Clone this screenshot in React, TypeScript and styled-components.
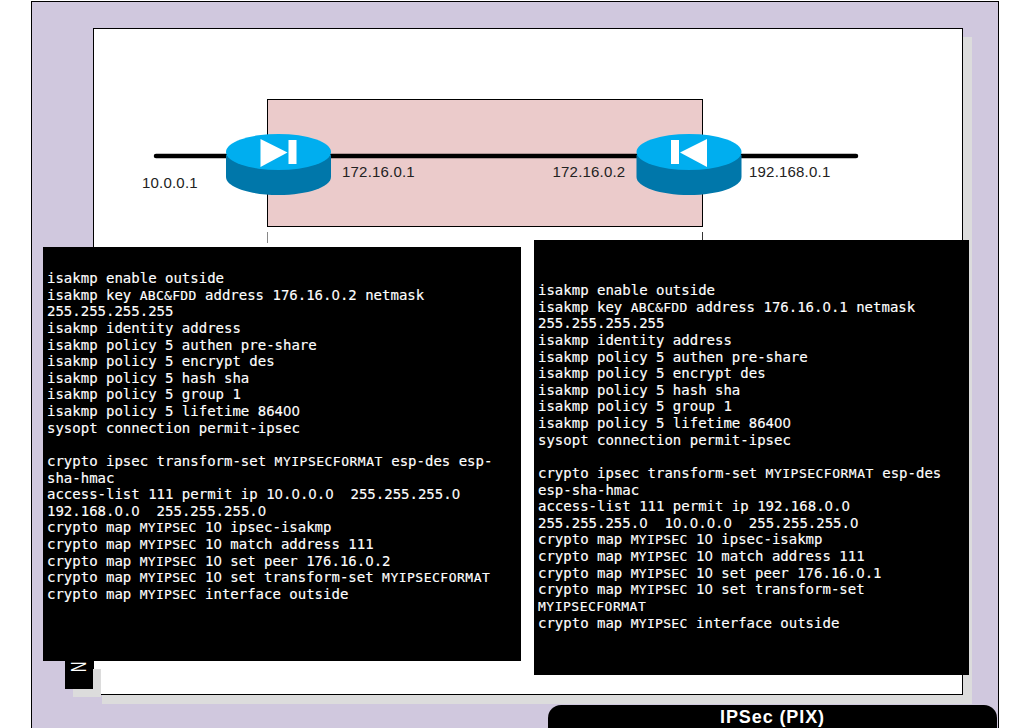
import React from 'react';
import styled, { createGlobalStyle } from 'styled-components';

const GlobalStyle = createGlobalStyle`
  html, body {
    margin: 0;
    padding: 0;
    background: #fff;
  }
`;

const Page = styled.div`
  position: relative;
  width: 1030px;
  height: 728px;
  overflow: hidden;
  padding: 1px 0 0 31px;
  box-sizing: border-box;
`;

const Slide = styled.div`
  box-sizing: border-box;
  width: 968px;
  height: 800px;
  padding: 26px 0 0 60.5px;
  background: #d0c8de;
  border: 1.5px solid #000;
`;

const Panel = styled.div`
  box-sizing: border-box;
  width: 870px;
  height: 667px;
  background: #fff;
  border: 1px solid #000;
  box-shadow: 9px 9px 0 #dcdcdc;
  padding: 70px 0 0 60px;
`;

const Diagram = styled.svg`
  display: block;
  overflow: visible;
`;

const Label = styled.text`
  font-family: "Liberation Sans", Arial, sans-serif;
  font-size: 15px;
  letter-spacing: 0.2px;
  fill: #222;
`;

const Terminal = styled.div<{ $left: number; $top: number; $width: number; $height: number; $padTop: number }>`
  position: absolute;
  left: ${(p) => p.$left}px;
  top: ${(p) => p.$top}px;
  width: ${(p) => p.$width}px;
  height: ${(p) => p.$height}px;
  box-sizing: border-box;
  padding: ${(p) => p.$padTop}px 0 0 4px;
  background: #000;
  color: #fff;
  font-family: "DejaVu Sans Mono", monospace;
  font-size: 14px;
  line-height: 16.64px;
  -webkit-text-stroke: 0.15px #fff;
`;

const Line = styled.div`
  height: 16.64px;
  white-space: pre;
`;

const Caps = styled.span<{ $spacing: number }>`
  font-size: 13px;
  letter-spacing: ${(p) => p.$spacing}px;
`;

// the slide's zero has no slash: a proportional zero sized to the mono advance
const Zero = styled.span`
  font-family: "DejaVu Sans", sans-serif;
  font-size: 13.25px;
`;

const SideTab = styled.div`
  position: absolute;
  left: 65px;
  top: 661px;
  width: 28px;
  height: 28px;
  background: #000;
  box-shadow: 8px 8px 0 #dcdcdc;
  color: #fff;
  font-family: "Liberation Sans", Arial, sans-serif;
  font-size: 22px;
`;

const SideTabLetter = styled.span`
  display: block;
  width: 28px;
  line-height: 28px;
  text-align: center;
  transform: translate(-1px, -8px) rotate(90deg) scaleX(0.68);
`;

const Footer = styled.div`
  position: absolute;
  left: 548px;
  top: 705px;
  width: 449px;
  height: 36px;
  border-radius: 13px;
  background: #000;
  color: #fff;
  font-family: "Liberation Sans", Arial, sans-serif;
  font-size: 18px;
  font-weight: 700;
  letter-spacing: 0.9px;
  line-height: 25px;
  text-align: center;
`;

const leftLines = [
  'isakmp enable outside',
  'isakmp key ABC&FDD address 176.16.0.2 netmask',
  '255.255.255.255',
  'isakmp identity address',
  'isakmp policy 5 authen pre-share',
  'isakmp policy 5 encrypt des',
  'isakmp policy 5 hash sha',
  'isakmp policy 5 group 1',
  'isakmp policy 5 lifetime 86400',
  'sysopt connection permit-ipsec',
  '',
  'crypto ipsec transform-set MYIPSECFORMAT esp-des esp-',
  'sha-hmac',
  'access-list 111 permit ip 10.0.0.0  255.255.255.0',
  '192.168.0.0  255.255.255.0',
  'crypto map MYIPSEC 10 ipsec-isakmp',
  'crypto map MYIPSEC 10 match address 111',
  'crypto map MYIPSEC 10 set peer 176.16.0.2',
  'crypto map MYIPSEC 10 set transform-set MYIPSECFORMAT',
  'crypto map MYIPSEC interface outside',
];

const rightLines = [
  'isakmp enable outside',
  'isakmp key ABC&FDD address 176.16.0.1 netmask',
  '255.255.255.255',
  'isakmp identity address',
  'isakmp policy 5 authen pre-share',
  'isakmp policy 5 encrypt des',
  'isakmp policy 5 hash sha',
  'isakmp policy 5 group 1',
  'isakmp policy 5 lifetime 86400',
  'sysopt connection permit-ipsec',
  '',
  'crypto ipsec transform-set MYIPSECFORMAT esp-des',
  'esp-sha-hmac',
  'access-list 111 permit ip 192.168.0.0',
  '255.255.255.0  10.0.0.0  255.255.255.0',
  'crypto map MYIPSEC 10 ipsec-isakmp',
  'crypto map MYIPSEC 10 match address 111',
  'crypto map MYIPSEC 10 set peer 176.16.0.1',
  'crypto map MYIPSEC 10 set transform-set',
  'MYIPSECFORMAT',
  'crypto map MYIPSEC interface outside',
];

const capsSpacing: Record<string, number> = {
  'ABC&FDD': 0.3,
  MYIPSEC: 0.3,
  MYIPSECFORMAT: 0.5,
};

function ConfigLine({ text }: { text: string }) {
  const parts = text.split(/(ABC&FDD|MYIPSECFORMAT|MYIPSEC|0)/);
  return (
    <Line>
      {parts.map((part, i) => {
        if (part === '0') return <Zero key={i}>0</Zero>;
        if (capsSpacing[part]) return <Caps key={i} $spacing={capsSpacing[part]}>{part}</Caps>;
        return part;
      })}
    </Line>
  );
}

function Router({ x, flip }: { x: number; flip?: boolean }) {
  return (
    <g transform={`translate(${x} 0)${flip ? ' scale(-1 1)' : ''}`}>
      <path d="M-52.5 56v22c0 10 23.500 18 52.500 18s52.500-8 52.500-18V56z" fill="#0077aa" />
      <ellipse cx="0" cy="53" rx="52.500" ry="18" fill="#00aeef" />
      <path d="M-18 40L9 53.500L-18 68z" fill="#fff" />
      <rect x="10" y="41" width="8" height="24" fill="#fff" />
    </g>
  );
}

export default function App() {
  return (
    <>
      <GlobalStyle />
      <Page>
        <Slide>
          <Panel>
            <Diagram width="750" height="160" viewBox="0 0 750 160">
              <rect x="113.500" y="0.500" width="435" height="127" fill="#ebcbcb" stroke="#000" />
              <path d="M113.500 133v11" stroke="#888" />
              <path d="M548.500 133v8" stroke="#333" />
              <path d="M2 57H702" stroke="#000" strokeWidth="4.500" strokeLinecap="round" />
              <Router x={124.5} />
              <Router x={535} flip />
              <Label x="-12" y="89">10.0.0.1</Label>
              <Label x="188" y="78">172.16.0.1</Label>
              <Label x="398.5" y="78">172.16.0.2</Label>
              <Label x="595" y="78">192.168.0.1</Label>
            </Diagram>
          </Panel>
        </Slide>
        <SideTab>
          <SideTabLetter>N</SideTabLetter>
        </SideTab>
        <Terminal $left={43} $top={247} $width={478} $height={414} $padTop={23}>
          {leftLines.map((line, i) => <ConfigLine key={i} text={line} />)}
        </Terminal>
        <Terminal $left={534} $top={240} $width={435} $height={435} $padTop={42}>
          {rightLines.map((line, i) => <ConfigLine key={i} text={line} />)}
        </Terminal>
        <Footer>IPSec (PIX)</Footer>
      </Page>
    </>
  );
}
